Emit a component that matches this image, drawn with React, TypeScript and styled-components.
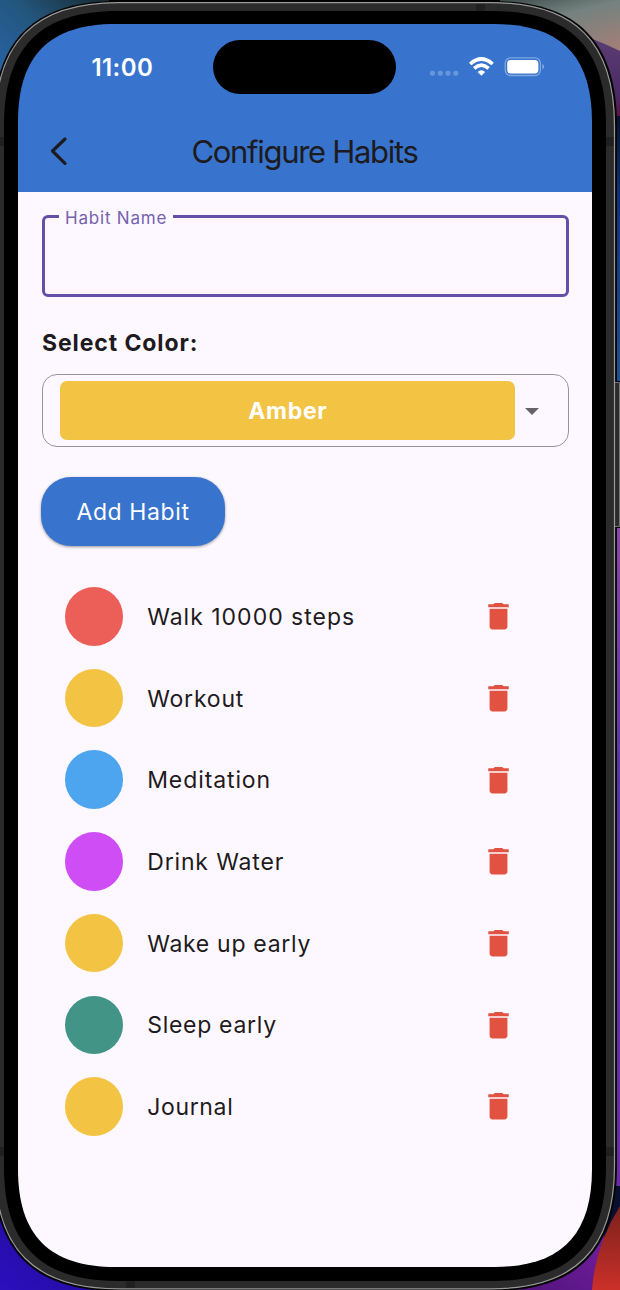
import React from "react";
import styled, { createGlobalStyle } from "styled-components";

const GlobalStyle = createGlobalStyle`
  *, *::before, *::after { box-sizing: border-box; }
  body {
    margin: 0;
    background: #000;
    font-family: Inter, "Liberation Sans", sans-serif;
    -webkit-font-smoothing: antialiased;
  }
`;

// Rounded rectangle whose corners ease in and out of the straight edges.
function squircle(x: number, y: number, w: number, h: number, r: number): string {
  const l = 1.21 * r;
  const c = 0.388 * r;
  const R = x + w;
  const B = y + h;
  return [
    `M${x + l} ${y}H${R - l}`,
    `C${R - c} ${y} ${R} ${y + c} ${R} ${y + l}`,
    `V${B - l}`,
    `C${R} ${B - c} ${R - c} ${B} ${R - l} ${B}`,
    `H${x + l}`,
    `C${x + c} ${B} ${x} ${B - c} ${x} ${B - l}`,
    `V${y + l}`,
    `C${x} ${y + c} ${x + c} ${y} ${x + l} ${y}Z`,
  ].join("");
}

const Desktop = styled.main`
  position: relative;
  width: 620px;
  height: 1290px;
  padding: 24px 28px 23px 18px;
  overflow: hidden;
`;

const Backdrop = styled.svg`
  position: absolute;
  inset: 0;
  width: 620px;
  height: 1290px;
`;

const Screen = styled.section`
  position: relative;
  width: 574px;
  height: 1243px;
  display: flex;
  flex-direction: column;
  color: #1d1b20;
  clip-path: path("${squircle(0, 0, 574, 1243, 81)}");
`;

const Header = styled.header`
  height: 168px;
  flex: none;
  background: #3874cd;
`;

const StatusBar = styled.div`
  height: 86px;
  display: grid;
  grid-template-columns: 195.3px 183.2px 195.5px;
  align-items: center;
`;

const Time = styled.time`
  padding-left: 73.5px;
  font-size: 24px;
  font-weight: 600;
  letter-spacing: 0.4px;
  color: #fff;
`;

const Island = styled.div`
  height: 54px;
  border-radius: 27px;
  background: #000;
`;

const Indicators = styled.svg`
  width: 118px;
  height: 24px;
  margin-left: 32.5px;
`;

const TitleBar = styled.div`
  height: 82px;
  display: grid;
  grid-template-columns: 81px 1fr 82px;
  align-items: center;
`;

const BackButton = styled.button`
  height: 70px;
  padding: 0;
  border: 0;
  background: none;
  display: grid;
  place-items: center;
`;

const Title = styled.h1`
  margin: 0;
  text-align: center;
  white-space: nowrap;
  font-size: 31px;
  font-weight: 400;
  letter-spacing: -1.3px;
`;

const Content = styled.div`
  flex: 1;
  display: flex;
  flex-direction: column;
  align-items: stretch;
  padding: 23px 23.5px 0;
  background: #fdf8ff;
`;

const NameField = styled.fieldset`
  margin: -9px 0 0;
  height: 91px;
  padding: 0 0 0 14.5px;
  border: 3px solid #6450a4;
  border-radius: 6px;
`;

const NameLabel = styled.legend`
  height: 20px;
  padding: 0 6px;
  font-size: 17px;
  line-height: 24px;
  letter-spacing: 0.8px;
  color: #7562ad;
`;

const NameInput = styled.input`
  width: 100%;
  height: 56px;
  border: 0;
  outline: 0;
  background: none;
  font: inherit;
`;

const SectionLabel = styled.h2`
  margin: 30px 0 15px 0.5px;
  font-size: 23px;
  line-height: 32px;
  font-weight: 700;
  letter-spacing: 0.9px;
`;

const ColorSelect = styled.div`
  height: 73px;
  display: flex;
  align-items: center;
  padding: 0 28.5px 0 17.5px;
  border: 1.5px solid #98959a;
  border-radius: 15px;
`;

const ColorChip = styled.div<{ $color: string }>`
  flex: 1;
  height: 59px;
  padding: 1px 0 0 1px;
  display: grid;
  place-items: center;
  border-radius: 7px;
  background: ${(p) => p.$color};
  color: #fff;
  font-size: 23px;
  font-weight: 700;
  letter-spacing: 0.7px;
`;

const Caret = styled.svg`
  width: 14px;
  height: 7px;
  margin: 1px 0 0 10.5px;
`;

const AddButton = styled.button`
  align-self: flex-start;
  width: 184px;
  height: 69px;
  margin: 29.5px 0 0 -0.5px;
  padding: 2px 0 0;
  border: 0;
  border-radius: 30px;
  background: #3874cd;
  color: #fff;
  font: 400 23px Inter, "Liberation Sans", sans-serif;
  letter-spacing: 0.6px;
  box-shadow: 0 1px 3px rgba(0, 0, 0, 0.4);
`;

const HabitList = styled.ul`
  margin: 30px 0 0;
  padding: 0;
  list-style: none;
`;

const HabitRow = styled.li`
  height: 81.7px;
  display: flex;
  align-items: center;
  padding: 0 52.5px 0 23.2px;
`;

const Dot = styled.span<{ $color: string }>`
  width: 58.5px;
  height: 58.5px;
  border-radius: 50%;
  background: ${(p) => p.$color};
`;

const HabitName = styled.span<{ $tracking: number }>`
  flex: 1;
  padding-top: 1px;
  margin-left: 24px;
  white-space: nowrap;
  font-size: 23px;
  letter-spacing: ${(p) => p.$tracking}px;
`;

const DeleteButton = styled.button`
  width: 36px;
  height: 36px;
  padding: 0;
  border: 0;
  background: none;
  svg { display: block; }
`;

const habits = [
  { name: "Walk 10000 steps", color: "#ec5f59", tracking: 1 },
  { name: "Workout", color: "#f3c344", tracking: 0.8 },
  { name: "Meditation", color: "#4ca5ee", tracking: 0.9 },
  { name: "Drink Water", color: "#cf4df5", tracking: 0.85 },
  { name: "Wake up early", color: "#f3c344", tracking: 0.7 },
  { name: "Sleep early", color: "#429487", tracking: 0.7 },
  { name: "Journal", color: "#f3c344", tracking: 0.65 },
];

const TrashIcon = () => (
  <svg width="36" height="36" viewBox="-0.35 -0.2 24.6 24.6">
    <path
      fill="#e15241"
      d="M6.2 19.3c0 1.1.9 2 2 2h8.2c1.1 0 2-.9 2-2v-12.1H6.2v12.1zM19.3 4.1h-3.5l-1-.9h-5l-1 .9H5.3v2.1h14v-2.1z"
    />
  </svg>
);

const PhoneBackdrop = () => (
  <Backdrop viewBox="0 0 620 1290" aria-hidden="true">
    <defs>
      <linearGradient id="skyLeft" x1="0" y1="1" x2="1" y2="0">
        <stop offset="0" stopColor="#2867b4" />
        <stop offset=".55" stopColor="#24577f" />
        <stop offset="1" stopColor="#182a30" />
      </linearGradient>
      <linearGradient id="skyRight" x1="0" y1="0" x2=".5" y2="1">
        <stop offset="0" stopColor="#3d4c4b" />
        <stop offset=".4" stopColor="#74827f" />
        <stop offset="1" stopColor="#a07f78" />
      </linearGradient>
      <linearGradient id="hill" x1="0" y1="0" x2="0" y2="1">
        <stop offset="0" stopColor="#5b3d72" />
        <stop offset=".75" stopColor="#4b2965" />
        <stop offset="1" stopColor="#5a1746" />
      </linearGradient>
      <linearGradient id="stripBlue" x1="0" y1="0" x2="0" y2="1">
        <stop offset="0" stopColor="#06112c" />
        <stop offset=".3" stopColor="#10317d" />
        <stop offset="1" stopColor="#1d5292" />
      </linearGradient>
      <linearGradient id="stripPurple" x1="0" y1="0" x2="0" y2="1">
        <stop offset="0" stopColor="#8e44ab" />
        <stop offset=".4" stopColor="#5535a8" />
        <stop offset="1" stopColor="#6c2aa8" />
      </linearGradient>
      <linearGradient id="red" x1="0" y1="0" x2="0" y2="1">
        <stop offset="0" stopColor="#7a211c" />
        <stop offset="1" stopColor="#cb3029" />
      </linearGradient>
      <linearGradient id="violet" x1="0" y1="1" x2="1" y2="0">
        <stop offset="0" stopColor="#4c1378" />
        <stop offset="1" stopColor="#7c1fa5" />
      </linearGradient>
      <linearGradient id="indigo" x1="0" y1="1" x2="1" y2="0">
        <stop offset="0" stopColor="#2c10bd" />
        <stop offset="1" stopColor="#190780" />
      </linearGradient>
    </defs>
    <rect width="109" height="110" fill="url(#skyLeft)" />
    <rect x="500" width="120" height="60" fill="url(#skyRight)" />
    <path d="M590 38Q606 44 620 51V116H590Z" fill="url(#hill)" />
    <rect x="590" y="116" width="30" height="265" fill="url(#stripBlue)" />
    <rect x="590" y="528" width="30" height="658" fill="url(#stripPurple)" />
    <rect x="590" y="1186" width="30" height="60" fill="#07102e" />
    <rect y="1190" width="130" height="100" fill="url(#indigo)" />
    <path d="M500 1290L604 1205V1290Z" fill="url(#violet)" />
    <path d="M592 1290Q595 1246 620 1206V1290Z" fill="url(#red)" />
    <path d={squircle(-7, 1, 624, 1290, 103)} fill="#050505" />
    <path d="M612 382.5H619.5V526.5H612Z" fill="#2b2b2b" stroke="#777" />
    <path d={squircle(-5, 2.6, 619.5, 1286.2, 102)} fill="#2b2b2b" stroke="#999" strokeWidth="1.2" />
    <g fill="#202020">
      <rect x="476" y="4" width="9" height="8" />
      <rect x="606" y="137" width="7.5" height="9" />
      <rect x="0" y="137" width="4" height="9" />
      <rect x="606" y="1147" width="7.5" height="9" />
      <rect x="0" y="1147" width="4" height="9" />
      <rect x="126" y="1281" width="9" height="7" />
    </g>
    <path d={squircle(4, 11, 602, 1270, 94)} fill="#000" />
  </Backdrop>
);

export default function App() {
  return (
    <>
      <GlobalStyle />
      <Desktop>
        <PhoneBackdrop />
        <Screen>
          <Header>
            <StatusBar>
              <Time>11:00</Time>
              <Island />
              <Indicators viewBox="0 0 118 24">
                <g fill="#6796da">
                  <rect x="1" y="15.8" width="5" height="5" rx="1.8" />
                  <rect x="8.8" y="15.8" width="5" height="5" rx="1.8" />
                  <rect x="16.5" y="15.8" width="5" height="5" rx="1.8" />
                  <rect x="24.3" y="15.8" width="5" height="5" rx="1.8" />
                </g>
                <g fill="none" stroke="#fff" strokeWidth="3.6">
                  <path d="M41.2 9Q52.4-1 63.6 9" />
                  <path d="M45.2 13.4Q52.4 7 59.6 13.4" />
                </g>
                <path d="M48.6 16.9Q52.4 13.5 56.2 16.9L52.4 20.8Z" fill="#fff" />
                <rect x="76.2" y="2.9" width="35.2" height="17.6" rx="5.4" fill="none" stroke="#80a7e0" strokeWidth="1.3" />
                <rect x="78.2" y="5" width="31.2" height="13.4" rx="3.6" fill="#fff" />
                <path d="M113.3 9Q115.2 9.8 115.2 11.7T113.3 14.4Z" fill="#80a7e0" />
              </Indicators>
            </StatusBar>
            <TitleBar>
              <BackButton aria-label="Back">
                <svg width="18" height="30" viewBox="0 0 18 30">
                  <path d="M15 3L2.5 15L15 27.3" fill="none" stroke="#1d1b20" strokeWidth="3.2" strokeLinecap="round" strokeLinejoin="round" />
                </svg>
              </BackButton>
              <Title>Configure Habits</Title>
            </TitleBar>
          </Header>
          <Content>
            <NameField>
              <NameLabel>Habit Name</NameLabel>
              <NameInput aria-label="Habit Name" />
            </NameField>
            <SectionLabel>Select Color:</SectionLabel>
            <ColorSelect>
              <ColorChip $color="#f3c344">Amber</ColorChip>
              <Caret viewBox="0 0 14 7">
                <path d="M0 0H14L7 7Z" fill="#666368" />
              </Caret>
            </ColorSelect>
            <AddButton>Add Habit</AddButton>
            <HabitList>
              {habits.map((h) => (
                <HabitRow key={h.name}>
                  <Dot $color={h.color} />
                  <HabitName $tracking={h.tracking}>{h.name}</HabitName>
                  <DeleteButton aria-label={`Delete ${h.name}`}>
                    <TrashIcon />
                  </DeleteButton>
                </HabitRow>
              ))}
            </HabitList>
          </Content>
        </Screen>
      </Desktop>
    </>
  );
}
